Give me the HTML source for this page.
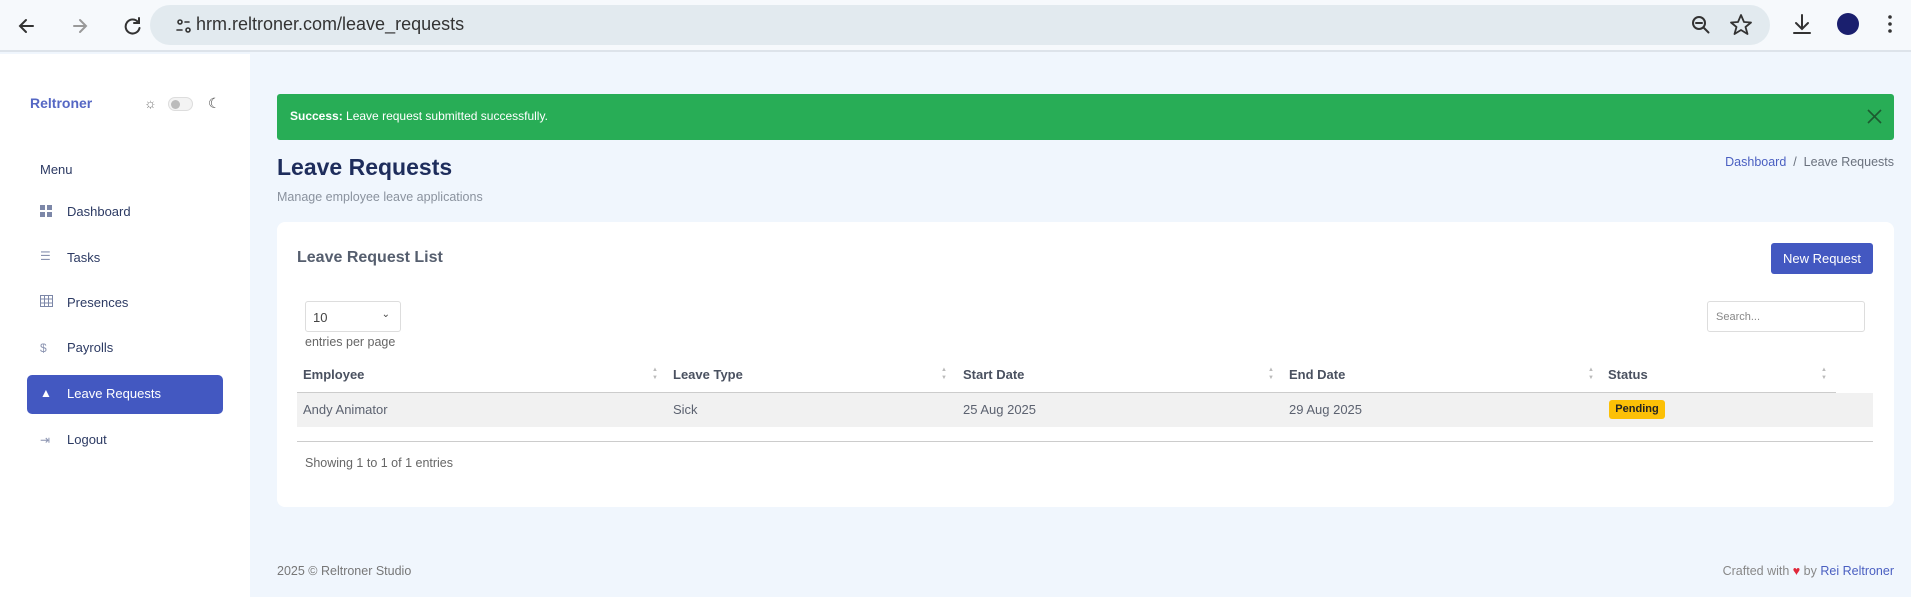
<!DOCTYPE html>
<html><head><meta charset="utf-8">
<style>
*{box-sizing:border-box;margin:0;padding:0}
body{width:1911px;height:597px;overflow:hidden;font-family:"Liberation Sans",sans-serif;background:#f0f6fd;position:relative;color:#333}
.abs{position:absolute}
.tb{left:0;top:0;width:1911px;height:52px;background:#f6f9fc;border-bottom:2px solid #dde3ea}
.url{left:150px;top:5px;width:1620px;height:40px;border-radius:20px;background:#e2eaef}
.side{left:0;top:54px;width:250px;height:543px;background:#fff}
.mi{position:absolute;left:67px;font-size:13px;color:#2c3a63}
.ic{position:absolute;left:40px;color:#8a93b0;font-size:12px}
.th{position:absolute;top:367px;font-size:13px;font-weight:bold;color:#4a5160}
.td{position:absolute;top:402px;font-size:13px;color:#5c6270}
.sa{position:absolute;top:366px;font-size:6px;color:#bbb;line-height:8px}
</style></head><body>
<div class="abs tb"></div>
<div class="abs url"></div>
<svg class="abs" style="left:14px;top:14px" width="200" height="24" viewBox="0 0 200 24" fill="none" stroke-width="2" stroke-linecap="round">
<path d="M19 12H7M12 6l-6 6 6 6" stroke="#333"/>
<path d="M60 12h12M66 6l6 6-6 6" stroke="#999"/>
<path d="M124 8a7 7 0 1 0 1.5 6M125 4v5h-5" stroke="#333"/>
<circle cx="166" cy="8" r="2" stroke="#333" stroke-width="1.6"/><path d="M171 8h4M163 16h5" stroke="#333" stroke-width="1.6"/><circle cx="174" cy="16" r="2" stroke="#333" stroke-width="1.6"/>
</svg>
<div class="abs" style="left:196px;top:14px;font-size:18px;color:#333">hrm.reltroner.com/leave_requests</div>
<svg class="abs" style="left:1690px;top:12px" width="210" height="28" viewBox="0 0 210 28" fill="none" stroke="#333" stroke-width="2" stroke-linecap="round">
<circle cx="9" cy="11" r="6"/><path d="M13.5 15.5l5 5M6 11h6"/>
<path d="M51 3l3 7 7 .5-5.5 4.5 2 7-6.5-4-6.5 4 2-7L41 10.5l7-.5z" stroke-width="1.8" stroke-linejoin="round"/>
<path d="M112 3v13M106 11l6 6 6-6M104 21h16"/>
<circle cx="158" cy="12" r="11" fill="#1a1f6e" stroke="none"/>
<circle cx="200" cy="5" r="1.8" fill="#333" stroke="none"/><circle cx="200" cy="12" r="1.8" fill="#333" stroke="none"/><circle cx="200" cy="19" r="1.8" fill="#333" stroke="none"/>
</svg>

<div class="abs side"></div>
<div class="abs" style="left:30px;top:95px;font-size:14px;font-weight:bold;color:#5567c4">Reltroner</div>
<div class="abs" style="left:144px;top:95px;font-size:14px;color:#777">☼</div>
<div class="abs" style="left:168px;top:97px;width:25px;height:14px;border:1px solid #ddd;border-radius:8px;background:#f3f3f3"><div style="margin:2px;width:9px;height:9px;border-radius:50%;background:#bbb"></div></div>
<div class="abs" style="left:208px;top:95px;font-size:14px;color:#444">☾</div>
<div class="abs" style="left:40px;top:162px;font-size:13px;color:#2c3a63">Menu</div>
<div class="ic" style="top:205px"><svg width="12" height="12"><rect x="0" y="0" width="5" height="5" fill="#7c87a8"/><rect x="7" y="0" width="5" height="5" fill="#7c87a8"/><rect x="0" y="7" width="5" height="5" fill="#7c87a8"/><rect x="7" y="7" width="5" height="5" fill="#7c87a8"/></svg></div>
<div class="mi" style="top:204px">Dashboard</div>
<div class="ic" style="top:249px">☰</div><div class="mi" style="top:250px">Tasks</div>
<div class="ic" style="top:295px"><svg width="13" height="12"><rect x=".5" y=".5" width="12" height="11" fill="none" stroke="#7c87a8"/><path d="M.5 4h12M.5 8h12M4.5 .5v11M8.5.5v11" stroke="#7c87a8"/></svg></div>
<div class="mi" style="top:295px">Presences</div>
<div class="ic" style="top:341px">$</div><div class="mi" style="top:340px">Payrolls</div>
<div class="abs" style="left:27px;top:375px;width:196px;height:39px;background:#4358c1;border-radius:5px"></div>
<div class="abs" style="left:40px;top:386px;font-size:12px;color:#fff">▲</div>
<div class="mi" style="top:386px;color:#fff">Leave Requests</div>
<div class="ic" style="top:433px">⇥</div><div class="mi" style="top:432px">Logout</div>

<div class="abs" style="left:277px;top:94px;width:1617px;height:46px;background:#28ad56;border-radius:3px"></div>
<div class="abs" style="left:290px;top:109px;font-size:12px;color:#fff"><b>Success:</b> Leave request submitted successfully.</div>
<svg class="abs" style="left:1867px;top:109px" width="15" height="15"><path d="M1 1l13 13M14 1L1 14" stroke="#1c5a30" stroke-width="1.6"/></svg>

<div class="abs" style="left:277px;top:154px;font-size:23px;font-weight:bold;color:#1e2d5c">Leave Requests</div>
<div class="abs" style="left:277px;top:190px;font-size:12.5px;color:#8a929e">Manage employee leave applications</div>
<div class="abs" style="right:17px;top:155px;font-size:12.5px;color:#6a717d"><span style="color:#4a5fc1">Dashboard</span> &nbsp;/&nbsp; Leave Requests</div>

<div class="abs" style="left:277px;top:222px;width:1617px;height:285px;background:#fff;border-radius:8px"></div>
<div class="abs" style="left:297px;top:249px;font-size:16px;font-weight:bold;color:#555e6e">Leave Request List</div>
<div class="abs" style="left:1771px;top:243px;width:102px;height:31px;background:#4358c1;border-radius:3px;color:#fff;font-size:13px;text-align:center;line-height:31px">New Request</div>

<div class="abs" style="left:305px;top:301px;width:96px;height:31px;border:1px solid #ddd;border-radius:3px;font-size:13px;color:#444;padding:8px 7px">10<span style="position:absolute;right:10px;top:7px;font-size:10px">&#8964;</span></div>
<div class="abs" style="left:305px;top:335px;font-size:12.5px;color:#666">entries per page</div>
<div class="abs" style="left:1707px;top:301px;width:158px;height:31px;border:1px solid #ddd;border-radius:3px;font-size:11px;color:#888;padding:9px 8px">Search...</div>

<div class="th" style="left:303px">Employee</div>
<div class="th" style="left:673px">Leave Type</div>
<div class="th" style="left:963px">Start Date</div>
<div class="th" style="left:1289px">End Date</div>
<div class="th" style="left:1608px">Status</div>
<div class="sa" style="left:652px">▲<br>▼</div><div class="sa" style="left:941px">▲<br>▼</div><div class="sa" style="left:1268px">▲<br>▼</div><div class="sa" style="left:1588px">▲<br>▼</div><div class="sa" style="left:1821px">▲<br>▼</div>
<div class="abs" style="left:297px;top:392px;width:1539px;height:1px;background:#ccc"></div>
<div class="abs" style="left:297px;top:393px;width:1576px;height:34px;background:#f1f1f1"></div>
<div class="td" style="left:303px">Andy Animator</div>
<div class="td" style="left:673px">Sick</div>
<div class="td" style="left:963px">25 Aug 2025</div>
<div class="td" style="left:1289px">29 Aug 2025</div>
<div class="abs" style="left:1609px;top:400px;width:56px;height:19px;background:#fcc006;border-radius:3px;font-size:11px;font-weight:bold;color:#222;text-align:center;line-height:19px">Pending</div>
<div class="abs" style="left:297px;top:441px;width:1576px;height:1px;background:#ccc"></div>
<div class="abs" style="left:305px;top:456px;font-size:12.5px;color:#666">Showing 1 to 1 of 1 entries</div>

<div class="abs" style="left:277px;top:564px;font-size:12.5px;color:#777">2025 © Reltroner Studio</div>
<div class="abs" style="right:17px;top:564px;font-size:12.5px;color:#888">Crafted with <span style="color:#e0283a">♥</span> by <span style="color:#4a5fc1">Rei Reltroner</span></div>
</body></html>
